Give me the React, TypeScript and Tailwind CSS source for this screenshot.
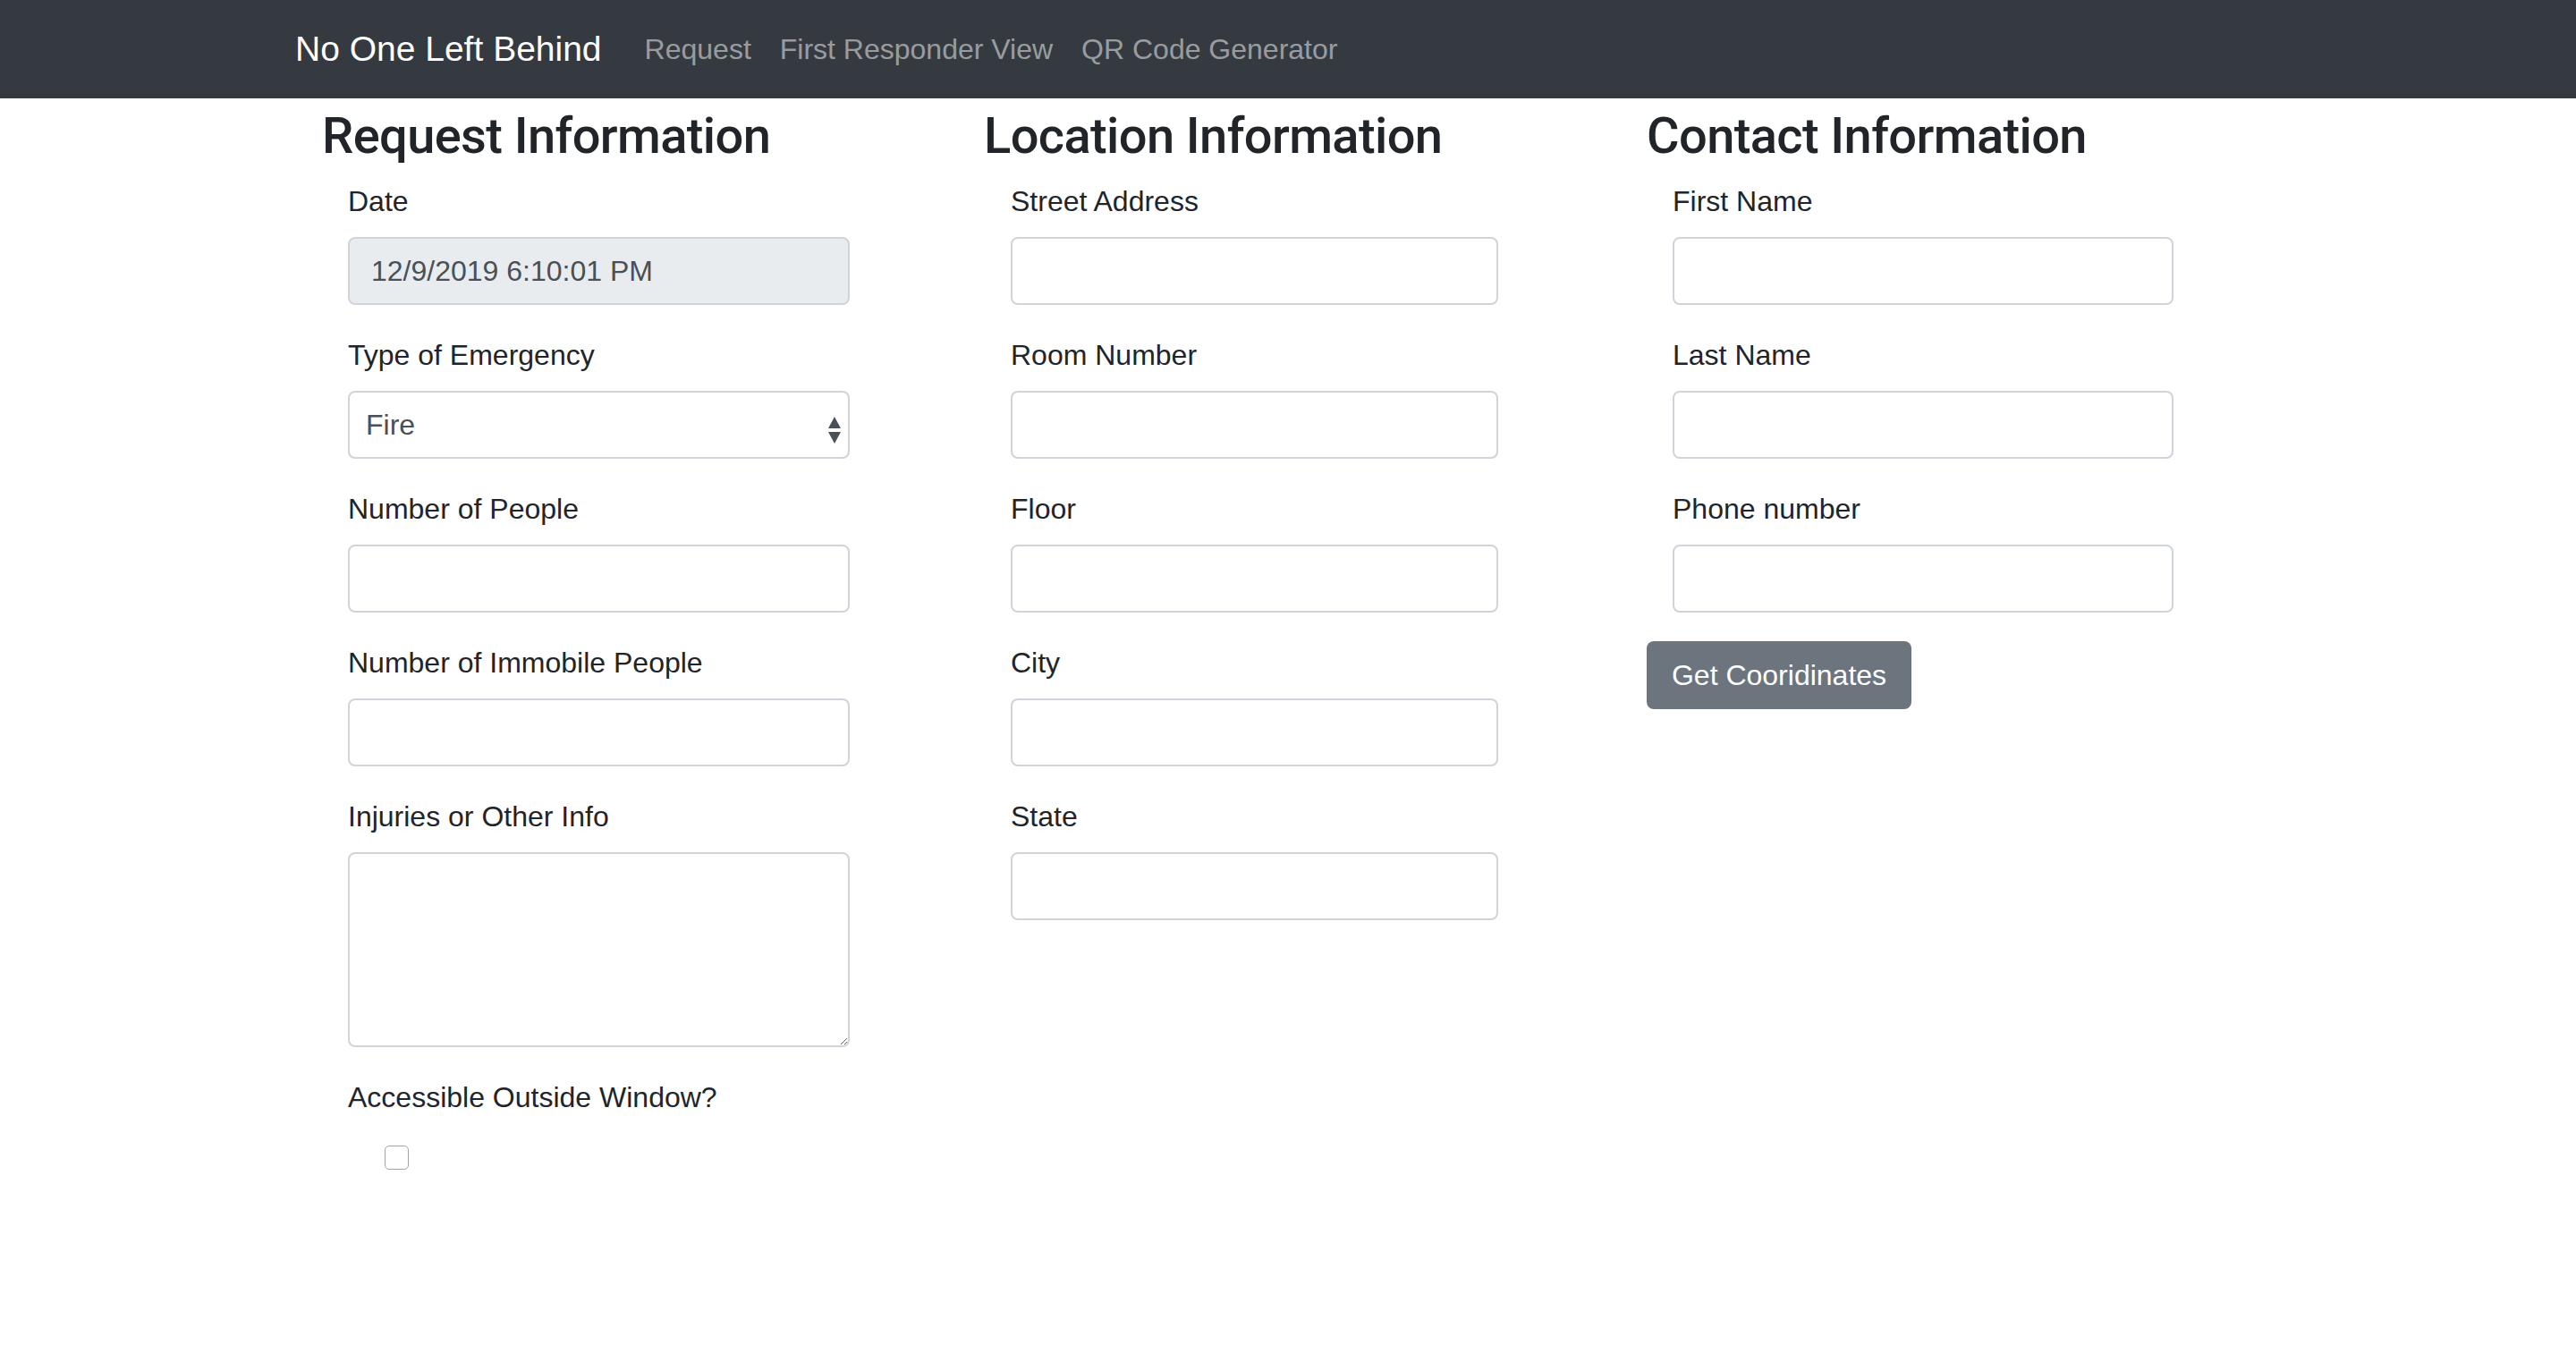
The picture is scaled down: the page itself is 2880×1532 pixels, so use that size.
import React from "react";

const inputCls =
  "block h-[76px] border-2 border-[#ced4da] rounded-[8px] px-[24px] text-[32px] text-[#495057] outline-none";

const Field = ({ label, width, children }: { label: string; width: string; children?: React.ReactNode }) => (
  <div className="mb-[32px]">
    <label className="block text-[32px] leading-[48px] mb-[16px] text-[#212529]">{label}</label>
    {children ?? <input type="text" className={`${inputCls} bg-white ${width}`} />}
  </div>
);

const Heading = ({ children }: { children: React.ReactNode }) => (
  <h3 className="text-[56px] leading-[1.2] mb-[15px] font-medium tracking-[-0.6px] text-[#212529] font-['Roboto',sans-serif]">
    {children}
  </h3>
);

const App = () => {
  return (
    <div className="min-h-screen bg-white font-['Liberation_Sans',Arial,sans-serif] text-[#212529]">
      <nav className="h-[110px] bg-[#343a40] flex items-center pl-[330px]">
        <a className="text-[39px] text-white mr-[32px]">No One Left Behind</a>
        <a className="text-[32px] text-white/50 px-[16px]">Request</a>
        <a className="text-[32px] text-white/50 px-[16px]">First Responder View</a>
        <a className="text-[32px] text-white/50 px-[16px]">QR Code Generator</a>
      </nav>

      <div className="flex pl-[360px] pt-[9px]">
        {/* request */}
        <div className="w-[740px]">
          <Heading>Request Information</Heading>
          <div className="pl-[29px]">
            <Field label="Date" width="w-[561px]">
              <input
                type="text"
                readOnly
                value="12/9/2019 6:10:01 PM"
                className={`${inputCls} w-[561px] bg-[#e9ecef]`}
              />
            </Field>
            <Field label="Type of Emergency" width="w-[561px]">
              <div className="relative w-[561px]">
                <select className="block w-full h-[76px] appearance-none border-2 border-[#ced4da] rounded-[8px] bg-white pl-[18px] text-[32px] text-[#495057] outline-none">
                  <option>Fire</option>
                  <option>Flood</option>
                  <option>Earthquake</option>
                </select>
                <svg
                  className="absolute right-[10px] top-[29px] pointer-events-none"
                  width="14"
                  height="30"
                  viewBox="0 0 14 30"
                >
                  <path d="M7 0 L14 13 L0 13 Z" fill="#495057" />
                  <path d="M0 17 L14 17 L7 30 Z" fill="#495057" />
                </svg>
              </div>
            </Field>
            <Field label="Number of People" width="w-[561px]" />
            <Field label="Number of Immobile People" width="w-[561px]" />
            <Field label="Injuries or Other Info" width="w-[561px]">
              <textarea className="block w-[561px] h-[218px] border-2 border-[#ced4da] rounded-[8px] bg-white px-[24px] text-[32px] outline-none" />
            </Field>
            <label className="block text-[32px] leading-[48px] mb-[16px]">Accessible Outside Window?</label>
            <div className="pl-[41px] pt-[14px]">
              <input
                type="checkbox"
                className="block appearance-none w-[27px] h-[27px] border border-[#a3a3a3] rounded-[5px] bg-white"
              />
            </div>
          </div>
        </div>

        {/* location */}
        <div className="w-[741px]">
          <Heading>Location Information</Heading>
          <div className="pl-[30px]">
            <Field label="Street Address" width="w-[545px]" />
            <Field label="Room Number" width="w-[545px]" />
            <Field label="Floor" width="w-[545px]" />
            <Field label="City" width="w-[545px]" />
            <Field label="State" width="w-[545px]" />
          </div>
        </div>

        {/* contact */}
        <div className="w-[620px]">
          <Heading>Contact Information</Heading>
          <div className="pl-[29px]">
            <Field label="First Name" width="w-[560px]" />
            <Field label="Last Name" width="w-[560px]" />
            <Field label="Phone number" width="w-[560px]" />
          </div>
          <button className="w-[296px] h-[76px] rounded-[8px] bg-[#6c757d] text-white text-[32px]">
            Get Cooridinates
          </button>
        </div>
      </div>
    </div>
  );
};

export default App;
